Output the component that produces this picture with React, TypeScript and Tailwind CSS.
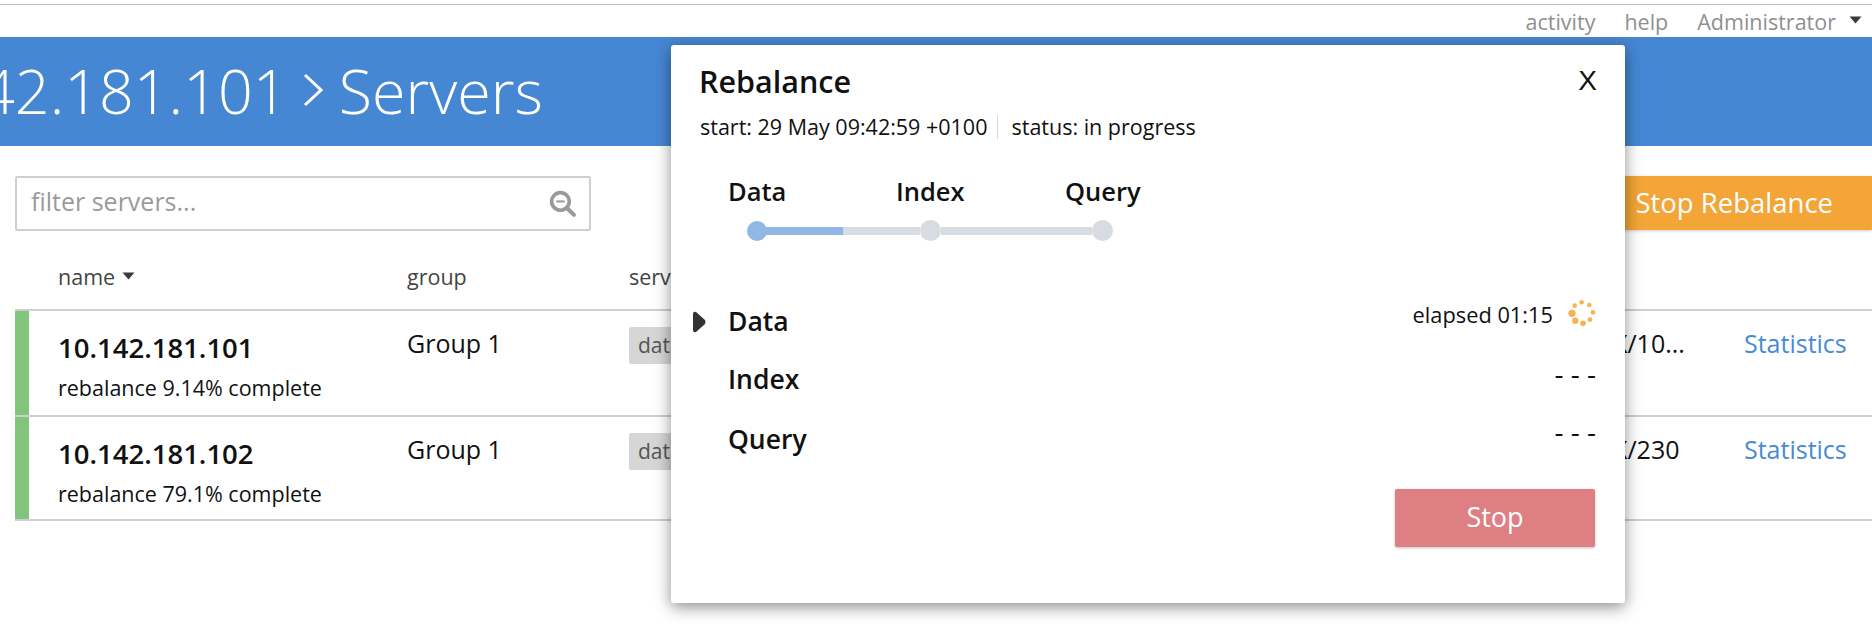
import React from 'react';

const servers = [
  { ip: '10.142.181.101', progress: 'rebalance 9.14% complete', memory: 'X/10...' },
  { ip: '10.142.181.102', progress: 'rebalance 79.1% complete', memory: 'X/230' }
];

const spinnerDots = [
  [92, 83, 11],
  [102, 105, 9.5],
  [125, 113, 8.5],
  [146, 102, 7],
  [155, 80, 7],
  [144, 58, 7],
  [121, 50, 7],
  [100, 60, 7]
];

function Caret({ className }: { className: string }) {
  return (
    <svg className={className} width="13" height="8" viewBox="0 0 13 8">
      <path d="M0.5 0.5 H12.5 L6.5 7.5 Z" fill="#3a3a3a" />
    </svg>
  );
}

function Spinner() {
  return (
    <svg width="28" height="28" viewBox="80 40 84 84" className="shrink-0">
      {spinnerDots.map(([x, y, r]) => (
        <circle key={x} cx={x} cy={y} r={r} fill="#f5b354" />
      ))}
    </svg>
  );
}

function SearchIcon() {
  return (
    <svg width="29" height="29" viewBox="0 0 28 28" className="shrink-0">
      <circle cx="12" cy="12" r="8.5" fill="none" stroke="#9a9a9a" strokeWidth="3.5" />
      <path d="M8 12 H16" stroke="#9a9a9a" strokeWidth="2" />
      <path d="M18.5 18.5 L25 25" stroke="#9a9a9a" strokeWidth="4" strokeLinecap="round" />
    </svg>
  );
}

function ServerRow({ ip, progress, memory }: { ip: string; progress: string; memory: string }) {
  return (
    <div className="flex h-[106px] last:h-[104px] border-t-2 border-[#cfcfcf] text-[#111]">
      <div className="w-[14px] bg-[#82c57c]" />
      <div className="w-[378px] pl-[29px] pt-[19px]">
        <div className="text-[27.5px] leading-[36px] font-semibold">{ip}</div>
        <div className="mt-[8px] text-[21.5px] leading-[28px]">{progress}</div>
      </div>
      <div className="w-[222px] pt-[16px] text-[25px] leading-[32px]">Group 1</div>
      <div className="w-[60px] pt-[16px]">
        <span className="block bg-[#d6d6d6] rounded-[2px] pl-[9px] text-[21px] leading-[37px] text-[#555]">data</span>
      </div>
      <div className="w-[996px] pl-[924px] pt-[16px] whitespace-nowrap text-[25px] leading-[32px]">{memory}</div>
      <div className="pl-[59px] pt-[16px] text-[25px] leading-[32px] text-[#4a8ad4]">Statistics</div>
    </div>
  );
}

export default function App() {
  return (
    <div className="relative w-[1872px] h-[642px] overflow-hidden bg-white font-['Open_Sans',sans-serif]">
      <div className="mt-[4px] border-t border-[#bbbbbb]" />
      <div className="flex h-[32px] items-center justify-end gap-[29px] pr-[36px] pt-[2px] text-[21.5px] text-[#8f8f8f]">
        <span>activity</span>
        <span>help</span>
        <span className="relative">
          Administrator
          <Caret className="absolute -right-[26px] top-[10px]" />
        </span>
      </div>

      <div className="flex h-[109px] items-center overflow-hidden bg-[#4687d3] pb-[3px]">
        <div className="-ml-[139px] whitespace-nowrap text-[61px] font-light leading-none text-white">
          10.142.181.101
        </div>
        <svg width="20" height="34" viewBox="0 0 20 34" className="ml-[15px] mr-[16px] shrink-0">
          <path d="M2 2 L18 17 L2 32" fill="none" stroke="#ffffff" strokeWidth="3" />
        </svg>
        <div className="whitespace-nowrap text-[61px] font-light leading-none text-white">Servers</div>
      </div>

      <div className="flex items-start justify-between pl-[15px] pt-[30px]">
        <div className="flex h-[55px] w-[576px] items-center justify-between rounded-[2px] border-2 border-[#cfcfcf] pl-[14px] pr-[12px]">
          <span className="-mt-[4px] text-[25px] text-[#9a9a9a]">filter servers...</span>
          <SearchIcon />
        </div>
        <div className="flex h-[54px] w-[300px] items-center justify-end bg-[#f3a537] pr-[39px] text-[27.5px] text-white shadow-[0_1px_3px_rgba(0,0,0,0.2)]">
          Stop Rebalance
        </div>
      </div>

      <div className="flex h-[78px] items-start pl-[58px] pt-[31px] text-[21.5px] leading-[30px] text-[#444]">
        <div className="relative w-[349px]">
          name
          <Caret className="absolute left-[64px] top-[10px]" />
        </div>
        <div className="w-[222px]">group</div>
        <div>services</div>
      </div>

      <div className="ml-[15px] border-b-2 border-[#cfcfcf]">
        {servers.map(s => (
          <ServerRow key={s.ip} {...s} />
        ))}
      </div>

      <div className="absolute left-[671px] top-[45px] h-[558px] w-[954px] rounded-[3px] bg-white text-[#111] shadow-[0_4px_16px_rgba(0,0,0,0.45)]">
        <div className="flex items-start justify-between pl-[28px] pr-[28px] pt-[16px]">
          <div className="text-[30.5px] font-semibold leading-[40px]">Rebalance</div>
          <div className="text-[28px] leading-[40px] font-['Liberation_Sans',sans-serif]">X</div>
        </div>
        <div className="mt-[12px] flex items-center pl-[29px] text-[21.5px] leading-[28px]">
          <span>start: 29 May 09:42:59 +0100</span>
          <span className="ml-[10px] mr-[13px] h-[24px] w-px bg-[#d8d8d8]" />
          <span>status: in progress</span>
        </div>

        <div className="mt-[34px] flex pl-[57px] text-[25.5px] font-semibold leading-[32px]">
          <div className="w-[168px]">Data</div>
          <div className="w-[169px]">Index</div>
          <div>Query</div>
        </div>
        <div className="mt-[13px] flex items-center pl-[76px]">
          <div className="h-[20px] w-[20px] rounded-full bg-[#8fb8e5]" />
          <div className="-ml-px h-[8px] w-[77px] bg-[#8fb8e5]" />
          <div className="h-[8px] w-[77px] bg-[#d7dce3]" />
          <div className="h-[21px] w-[21px] rounded-full bg-[#d7dce3]" />
          <div className="h-[8px] w-[151px] bg-[#d7dce3]" />
          <div className="h-[21px] w-[21px] rounded-full bg-[#d7dce3]" />
        </div>

        <div className="mt-[58px] pl-[21px] pr-[29px]">
          <div className="flex h-[58px] items-start">
            <svg width="14" height="22" viewBox="0 0 14 22" className="mt-[12px] shrink-0">
              <path d="M1 3 Q1 0 4 1 L13 9 Q14 11 13 13 L4 21 Q1 22 1 19 Z" fill="#333333" />
            </svg>
            <div className="ml-[22px] text-[26.5px] font-semibold leading-[44px]">Data</div>
            <div className="ml-auto flex items-start gap-[15px]">
              <span className="mt-[3px] text-[21.8px] leading-[26px]">elapsed 01:15</span>
              <Spinner />
            </div>
          </div>
          <div className="flex h-[60px] items-start pl-[36px]">
            <div className="text-[26.5px] font-semibold leading-[44px]">Index</div>
            <div className="ml-auto text-[28px] leading-[32px]">- - -</div>
          </div>
          <div className="flex h-[60px] items-start pl-[36px]">
            <div className="text-[26.5px] font-semibold leading-[44px]">Query</div>
            <div className="-mt-[2px] ml-auto text-[28px] leading-[32px]">- - -</div>
          </div>
        </div>

        <div className="mt-[12px] flex justify-end pr-[30px]">
          <button className="h-[58px] w-[200px] rounded-[2px] bg-[#de7f84] pb-[1px] text-[27px] text-white shadow-[0_1px_3px_rgba(0,0,0,0.25)]">
            Stop
          </button>
        </div>
      </div>
    </div>
  );
}
